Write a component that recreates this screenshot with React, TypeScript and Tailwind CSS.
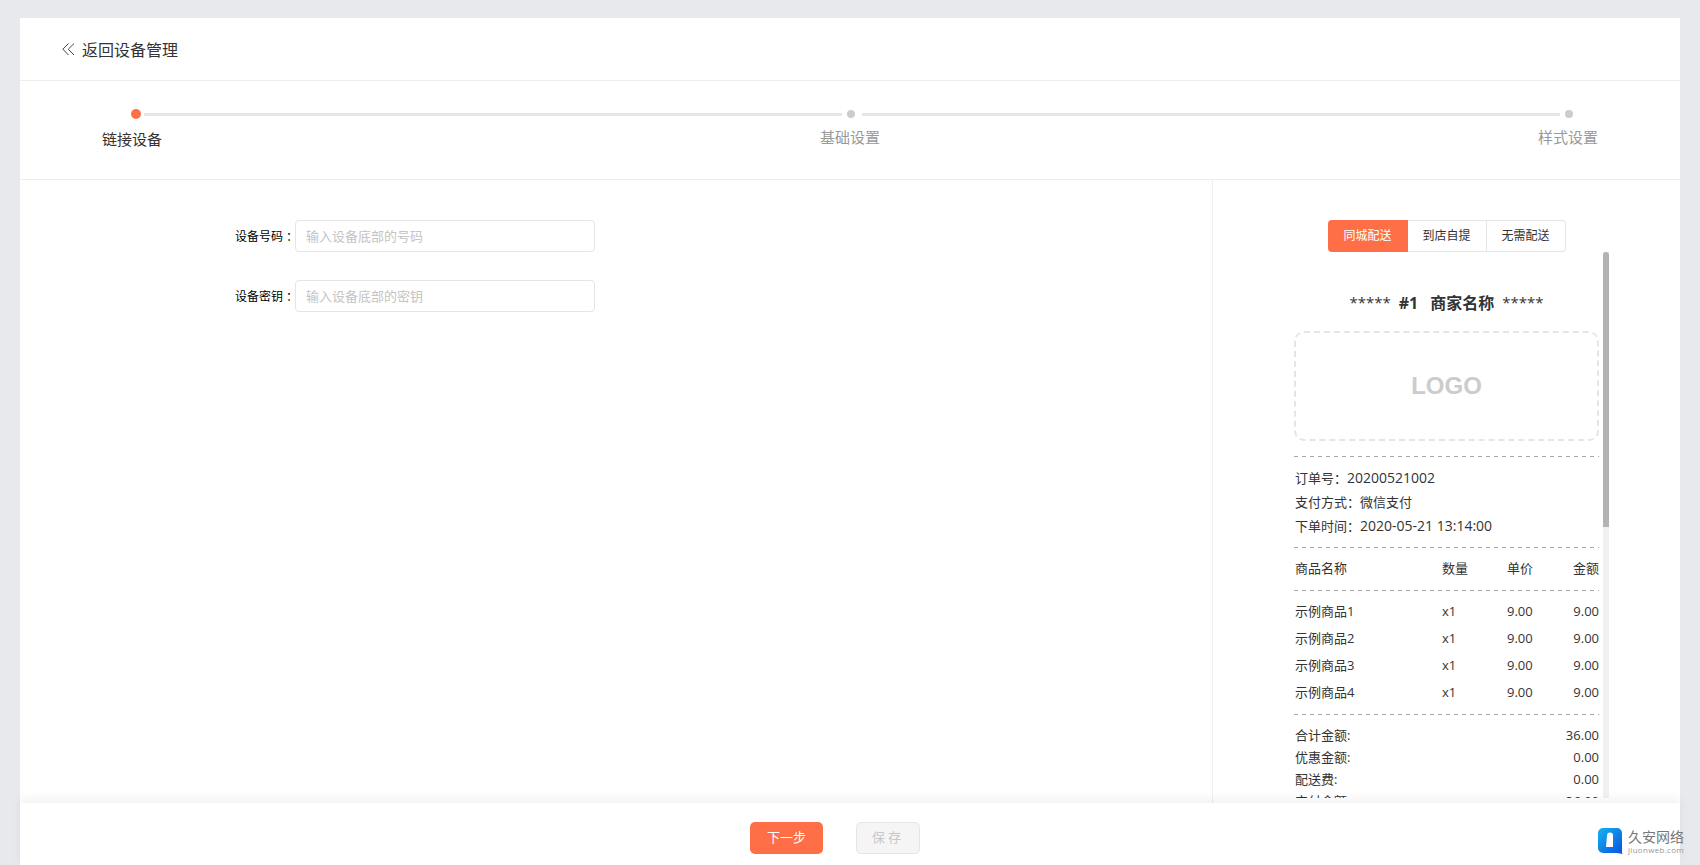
const FONT = "font-['Open_Sans','Noto_Sans_CJK_SC',sans-serif]";

const goods = [
  { name: "示例商品1", qty: "x1", price: "9.00", total: "9.00" },
  { name: "示例商品2", qty: "x1", price: "9.00", total: "9.00" },
  { name: "示例商品3", qty: "x1", price: "9.00", total: "9.00" },
  { name: "示例商品4", qty: "x1", price: "9.00", total: "9.00" },
];

const totals = [
  { label: "合计金额:", value: "36.00" },
  { label: "优惠金额:", value: "0.00" },
  { label: "配送费:", value: "0.00" },
  { label: "实付金额:", value: "36.00" },
];

function Dashed() {
  return <div className="h-px bg-[repeating-linear-gradient(90deg,#a8a8a8_0_4px,transparent_4px_8px)]" />;
}

function Steps() {
  return (
    <div className="h-[99px] shrink-0 border-b border-[#eeeeee] pt-7">
      <div className="flex items-center pl-[111px] pr-[107px]">
        <span className="h-2.5 w-2.5 shrink-0 rounded-full bg-[#ff6f47]" />
        <span className="ml-[3px] mr-[5px] h-[3px] flex-1 bg-[#e6e6e6]" />
        <span className="h-2 w-2 shrink-0 rounded-full bg-[#cccccc]" />
        <span className="ml-[7px] mr-[5px] h-[3px] flex-1 bg-[#e6e6e6]" />
        <span className="h-2 w-2 shrink-0 rounded-full bg-[#cccccc]" />
      </div>
      <div className="mt-[7px] flex items-start justify-between px-[82px] text-[15px] leading-[22px] text-[#999999]">
        <span className="mt-[2px] text-[#333333]">链接设备</span>
        <span>基础设置</span>
        <span>样式设置</span>
      </div>
    </div>
  );
}

function Field({ label, placeholder }: { label: string; placeholder: string }) {
  return (
    <div className="flex items-center">
      <label className="w-[60px] whitespace-nowrap pt-px text-xs text-[#000000]">
        {label}
        <span className="ml-[3px]">：</span>
      </label>
      <input
        className="h-8 w-[300px] rounded-[4px] border border-[#e5e5e5] px-2.5 text-[13px] outline-none placeholder:text-[#c4c4c4]"
        placeholder={placeholder}
      />
    </div>
  );
}

function Tabs() {
  return (
    <div className="mx-auto flex h-8 w-[238px] text-xs leading-[32px]">
      <span className="w-20 rounded-l-[4px] bg-[#ff6f47] text-center text-white">同城配送</span>
      <span className="w-[79px] border-y border-r border-[#e5e5e5] text-center leading-[30px] text-[#333333]">到店自提</span>
      <span className="w-[79px] rounded-r-[4px] border-y border-r border-[#e5e5e5] text-center leading-[30px] text-[#333333]">无需配送</span>
    </div>
  );
}

function Receipt() {
  return (
    <div className="relative ml-[81px] h-[546px] w-[315px] overflow-hidden text-[13px] text-[#333333]">
      <div className="w-[305px]">
        <div className="flex h-[79px] items-center justify-center gap-2 pt-[22px] text-base font-bold text-[#333333]">
          <span className="text-[15px] font-medium">*****</span>
          <span>#1</span>
          <span className="ml-1">商家名称</span>
          <span className="text-[15px] font-medium">*****</span>
        </div>
        <div className="flex h-[110px] items-center justify-center rounded-[10px] border-2 border-dashed border-[#e5e5e5] font-['Liberation_Sans',sans-serif] text-2xl font-bold text-[#cccccc]">
          LOGO
        </div>
        <div className="mt-[15px]">
          <Dashed />
        </div>
        <div className="py-[9px] pl-px leading-6">
          <div>
            订单号：<span className="text-sm">20200521002</span>
          </div>
          <div>支付方式：微信支付</div>
          <div>
            下单时间：<span className="text-sm">2020-05-21 13:14:00</span>
          </div>
        </div>
        <Dashed />
        <div className="flex h-[42px] items-center pl-px">
          <span className="w-[147px]">商品名称</span>
          <span className="w-[65px]">数量</span>
          <span className="w-[66px]">单价</span>
          <span className="flex-1 text-right">金额</span>
        </div>
        <Dashed />
        <div className="pb-2 pl-px pt-[7px]">
          {goods.map((g) => (
            <div key={g.name} className="flex h-[27px] items-center">
              <span className="w-[147px]">{g.name}</span>
              <span className="w-[65px]">{g.qty}</span>
              <span className="w-[66px]">{g.price}</span>
              <span className="flex-1 text-right">{g.total}</span>
            </div>
          ))}
        </div>
        <Dashed />
        <div className="pl-px pt-[10px]">
          {totals.map((t) => (
            <div key={t.label} className="flex h-[22px] items-center justify-between">
              <span>{t.label}</span>
              <span>{t.value}</span>
            </div>
          ))}
        </div>
      </div>
      {/* scrollbar */}
      <div className="absolute right-0 top-0 h-full w-1.5 bg-[#f1f1f1]">
        <div className="h-[275px] w-full rounded-t-[3px] bg-[#b3b3b3]" />
      </div>
    </div>
  );
}

function Watermark() {
  return (
    <div className="absolute bottom-[11px] left-[1597px] flex items-center gap-[5px]">
      <svg width="26" height="26" viewBox="0 0 26 26">
        <defs>
          <linearGradient id="wm" x1="0" y1="0" x2="1" y2="1">
            <stop offset="0" stopColor="#12b5f0" />
            <stop offset="1" stopColor="#0a4fe0" />
          </linearGradient>
        </defs>
        <path d="M6 0h14a5 5 0 0 1 5 5v20l1 1-6-1H6a5 5 0 0 1-5-5V5a5 5 0 0 1 5-5z" fill="url(#wm)" />
        <path d="M10 7.5a3 3 0 0 1 6 0V19h-7z" fill="#fff" />
      </svg>
      <div className="flex flex-col">
        <span className="text-[14px] leading-[17px] text-[#777777]">久安网络</span>
        <span className="text-[8px] leading-[9px] tracking-[0.3px] text-[#999999]">jiuonweb.com</span>
      </div>
    </div>
  );
}

export default function App() {
  return (
    <div className={`${FONT} relative flex h-[865px] w-full flex-col overflow-hidden bg-[#e8e9ed] pl-5 pr-5 pt-[18px]`}>
      <div className="flex min-h-0 flex-1 flex-col bg-white">
        <div className="flex h-[63px] shrink-0 items-center gap-[7px] border-b border-[#eeeeee] pl-[42px] pt-px text-base text-[#333333]">
          <svg width="13" height="13" viewBox="0 0 13 13" fill="none" stroke="#444444" strokeWidth="1" className="-mt-px">
            <path d="M6.5 0.5 0.8 6.2 6.5 12" />
            <path d="M12 0.5 6.3 6.2 12 12" />
          </svg>
          <span>返回设备管理</span>
        </div>
        <Steps />
        <div className="flex min-h-0 flex-1">
          <div className="flex flex-1 flex-col gap-[28px] pl-[215px] pt-10">
            <Field label="设备号码" placeholder="输入设备底部的号码" />
            <Field label="设备密钥" placeholder="输入设备底部的密钥" />
          </div>
          <div className="w-[468px] shrink-0 border-l border-[#eeeeee] pt-10">
            <Tabs />
            <Receipt />
          </div>
        </div>
        <div className="relative flex h-[62px] shrink-0 items-center justify-center gap-[33px] bg-white pr-[30px] pt-[7px] shadow-[0_-4px_10px_rgba(0,0,0,0.06)]">
          <button className="h-8 w-[73px] rounded-[5px] bg-[#ff6f47] text-[13px] text-white">下一步</button>
          <button className="h-8 w-[64px] rounded-[5px] border border-[#e5e5e5] bg-[#f5f5f5] text-[13px] tracking-[3px] text-[#c8c8c8]">保存</button>
        </div>
      </div>
      <Watermark />
    </div>
  );
}
